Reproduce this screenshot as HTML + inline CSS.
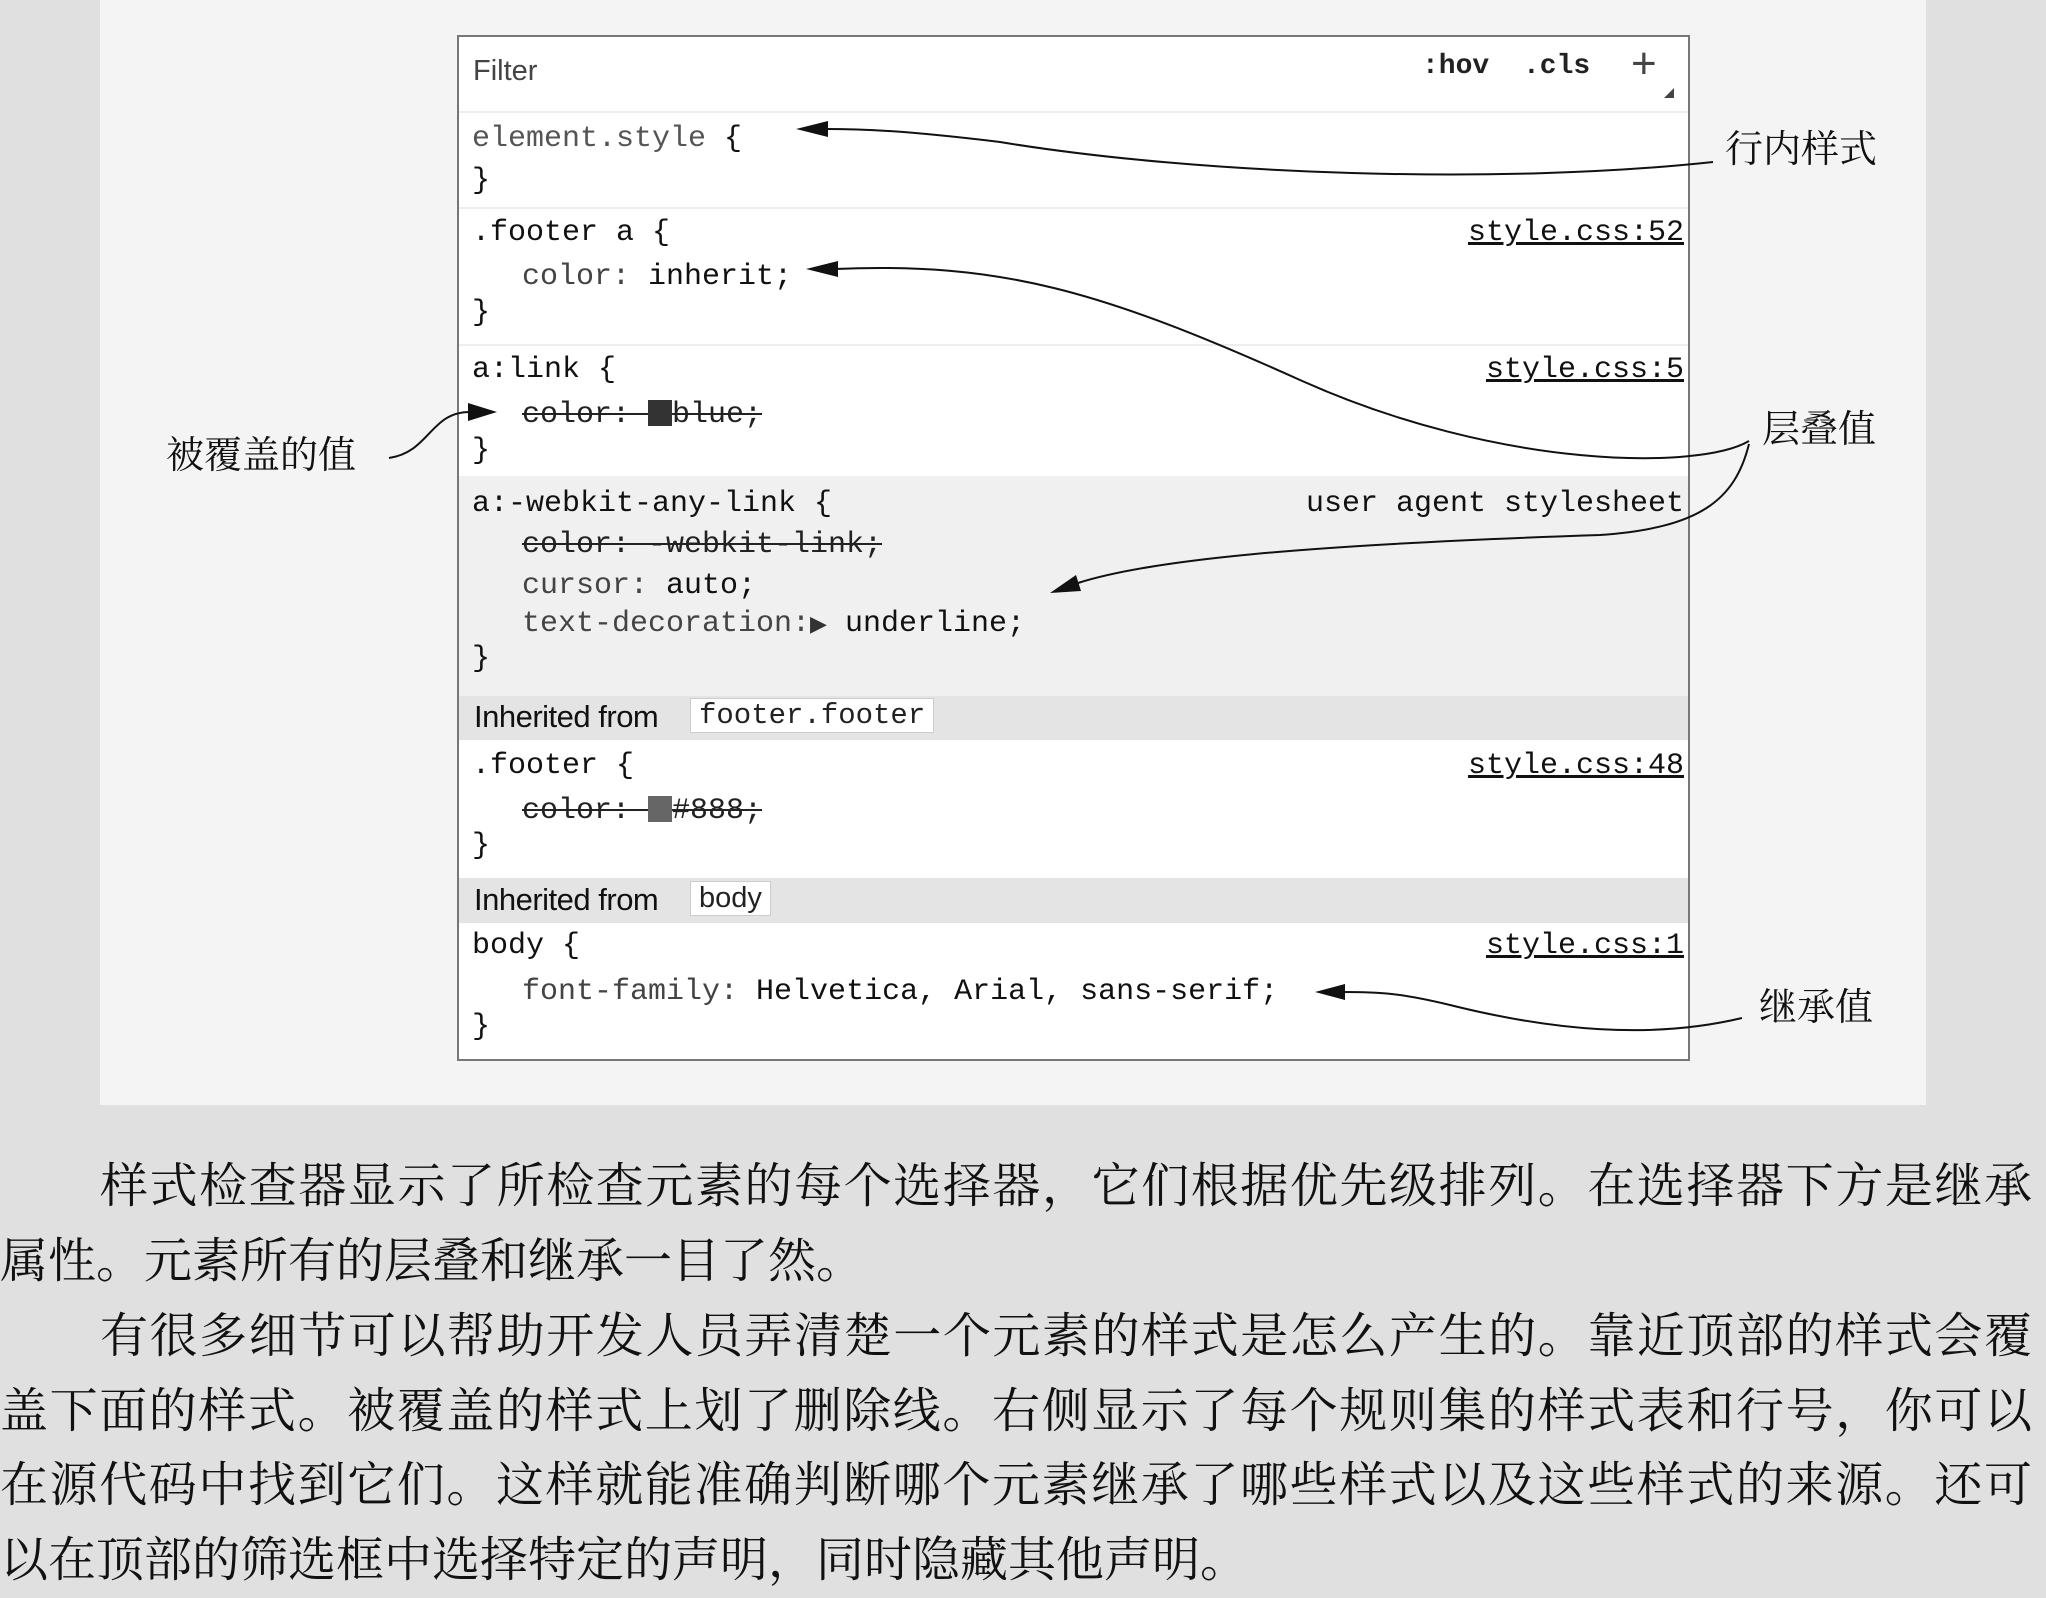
<!DOCTYPE html>
<html><head><meta charset="utf-8"><style>
*{margin:0;padding:0;box-sizing:border-box}
body{width:2046px;height:1578px;background:#e0e0e0;position:relative;overflow:hidden;font-family:"Liberation Sans",sans-serif}
#fig{position:absolute;left:100px;top:0;width:1826px;height:1105px;background:#f4f4f4}
#panel{position:absolute;left:457px;top:35px;width:1233px;height:1026px;background:#fff;border:2px solid #777}
.sec{position:absolute;left:0;width:1229px}
.sep{border-top:2px solid #eee}
.l{position:absolute;left:13px;font-family:"Liberation Mono",monospace;font-size:30px;line-height:44px;height:44px;color:#111;white-space:pre}
.p{color:#444}
.ind{left:63px}
.r{position:absolute;right:4px;font-family:"Liberation Mono",monospace;font-size:30px;line-height:44px;color:#111;white-space:pre}
.u{text-decoration:underline}
.s{text-decoration:line-through;text-decoration-thickness:2px;color:#222}
.sw{display:inline-block;width:24px;height:26px;background:#333;vertical-align:-4px;text-decoration:none}
.inh{position:absolute;left:0;width:1229px;background:#e4e4e4;font-size:31px;color:#111;letter-spacing:-0.5px}
.inh span.t{position:absolute;left:15px}
.inh span.b{position:absolute;background:#fff;border:1px solid #ccc;font-family:"Liberation Mono",monospace;font-size:29px;padding:0 8px;color:#222;letter-spacing:0}
.lab{position:absolute;font-family:"Noto Serif CJK SC","Noto Sans CJK SC",serif;font-size:38px;color:#111;white-space:nowrap}
.tx{position:absolute;left:0;width:2032px;font-family:"Liberation Serif","Noto Serif CJK SC",serif;font-size:48px;line-height:74px;height:74px;color:#111;white-space:nowrap;text-align:justify;text-align-last:justify}
.tx.n{text-align-last:left}
.tx.i{padding-left:100px}
</style></head><body>
<div id="fig"></div>
<div id="panel">
  <div class="sec" style="top:0;height:76px">
    <div style="position:absolute;left:14px;top:18px;font-size:29px;color:#444">Filter</div>
    <div style="position:absolute;left:963px;top:14px;font-family:'Liberation Mono',monospace;font-weight:bold;font-size:28px;color:#222">:hov</div>
    <div style="position:absolute;left:1064px;top:14px;font-family:'Liberation Mono',monospace;font-weight:bold;font-size:28px;color:#222">.cls</div>
    <div style="position:absolute;left:1172px;top:2px;font-size:44px;color:#444">+</div>
    <div style="position:absolute;left:1205px;top:51px;width:0;height:0;border-left:10px solid transparent;border-bottom:10px solid #444"></div>
  </div>
  <div class="sec sep" style="top:74px;height:96px">
    <div class="l" style="top:4px;color:#555">element.style <span style="color:#111">{</span></div>
    <div class="l" style="top:46px">}</div>
  </div>
  <div class="sec sep" style="top:170px;height:137px">
    <div class="l" style="top:2px">.footer a {</div>
    <div class="r u" style="top:2px">style.css:52</div>
    <div class="l ind" style="top:46px"><span class="p">color:</span> inherit;</div>
    <div class="l" style="top:82px">}</div>
  </div>
  <div class="sec sep" style="top:307px;height:132px">
    <div class="l" style="top:2px">a:link {</div>
    <div class="r u" style="top:2px">style.css:5</div>
    <div class="l ind" style="top:47px"><span class="s">color: <span class="sw"></span>blue;</span></div>
    <div class="l" style="top:83px">}</div>
  </div>
  <div class="sec" style="top:439px;height:220px;background:#f0f0f0">
    <div class="l" style="top:6px">a:-webkit-any-link {</div>
    <div class="r" style="top:6px">user agent stylesheet</div>
    <div class="l ind" style="top:47px"><span class="s">color: -webkit-link;</span></div>
    <div class="l ind" style="top:88px"><span class="p">cursor:</span> auto;</div>
    <div class="l ind" style="top:126px"><span class="p">text-decoration:</span><span style="font-size:22px;color:#333">▶</span> underline;</div>
    <div class="l" style="top:161px">}</div>
  </div>
  <div class="inh" style="top:659px;height:44px">
    <span class="t" style="top:3px">Inherited from</span>
    <span class="b" style="left:231px;top:2px">footer.footer</span>
  </div>
  <div class="sec" style="top:703px;height:138px">
    <div class="l" style="top:4px">.footer {</div>
    <div class="r u" style="top:4px">style.css:48</div>
    <div class="l ind" style="top:49px"><span class="s">color: <span class="sw" style="background:#666"></span>#888;</span></div>
    <div class="l" style="top:84px">}</div>
  </div>
  <div class="inh" style="top:841px;height:45px">
    <span class="t" style="top:4px">Inherited from</span>
    <span class="b" style="left:231px;top:3px;font-family:'Liberation Sans',sans-serif">body</span>
  </div>
  <div class="sec" style="top:886px;height:138px">
    <div class="l" style="top:1px">body {</div>
    <div class="r u" style="top:1px">style.css:1</div>
    <div class="l ind" style="top:47px"><span class="p">font-family:</span> Helvetica, Arial, sans-serif;</div>
    <div class="l" style="top:82px">}</div>
  </div>
</div>
<div class="lab" style="left:1725px;top:118px">行内样式</div>
<div class="lab" style="left:1762px;top:398px">层叠值</div>
<div class="lab" style="left:1759px;top:976px">继承值</div>
<div class="lab" style="left:166px;top:424px">被覆盖的值</div>
<svg width="2046" height="1105" style="position:absolute;left:0;top:0" fill="none" stroke="#111" stroke-width="2">
  <path d="M1713,162 C1500,185 1200,175 1000,142 C900,130 860,129 825,129"/>
  <polygon points="796,129 828,121 828,137" fill="#111" stroke="none"/>
  <path d="M835,269 C1000,262 1100,290 1300,380 C1500,470 1700,470 1749,441"/>
  <polygon points="806,269 838,261 838,277" fill="#111" stroke="none"/>
  <path d="M1749,444 C1735,500 1700,528 1600,535 C1300,545 1150,560 1078,583"/>
  <polygon points="1050,593 1076,575 1081,591" fill="#111" stroke="none"/>
  <path d="M389,458 C430,452 430,412 470,412"/>
  <polygon points="497,412 468,403 468,421" fill="#111" stroke="none"/>
  <path d="M1742,1018 C1650,1040 1550,1030 1450,1005 C1400,993 1380,992 1342,992"/>
  <polygon points="1315,992 1345,984 1345,1000" fill="#111" stroke="none"/>
</svg>
<div class="tx i" style="top:1150px">样式检查器显示了所检查元素的每个选择器，它们根据优先级排列。在选择器下方是继承</div>
<div class="tx n" style="top:1225px">属性。元素所有的层叠和继承一目了然。</div>
<div class="tx i" style="top:1300px">有很多细节可以帮助开发人员弄清楚一个元素的样式是怎么产生的。靠近顶部的样式会覆</div>
<div class="tx" style="top:1375px">盖下面的样式。被覆盖的样式上划了删除线。右侧显示了每个规则集的样式表和行号，你可以</div>
<div class="tx" style="top:1449px">在源代码中找到它们。这样就能准确判断哪个元素继承了哪些样式以及这些样式的来源。还可</div>
<div class="tx n" style="top:1524px">以在顶部的筛选框中选择特定的声明，同时隐藏其他声明。</div>
</body></html>
